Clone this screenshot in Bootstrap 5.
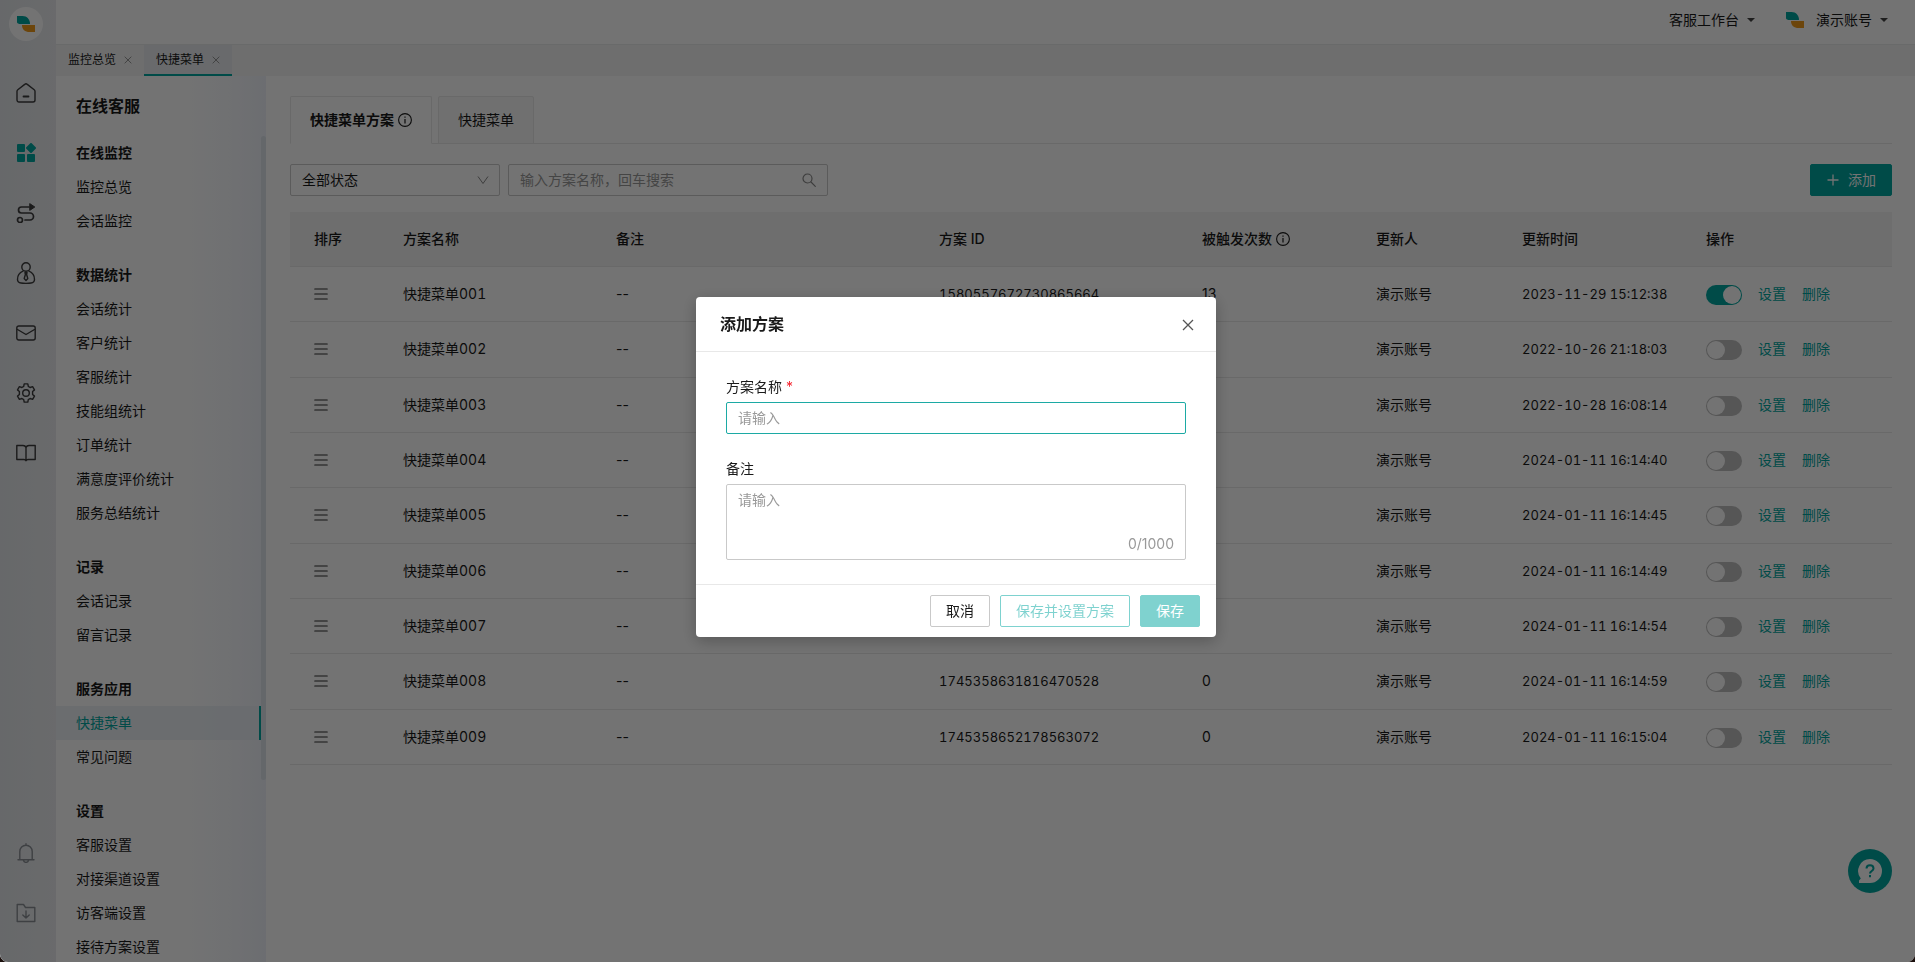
<!DOCTYPE html>
<html lang="zh-CN">
<head>
<meta charset="utf-8">
<meta name="viewport" content="width=device-width, initial-scale=1">
<title>快捷菜单</title>
<link href="https://cdn.jsdelivr.net/npm/bootstrap@5.3.0/dist/css/bootstrap.min.css" rel="stylesheet">
<style>
  :root { --teal: #00a6a0; --ink: #1a1a1a; --line: #e8e8e8; --field: #c9c9c9; }
  html { background: #1a0f0c; }
  body { font-family: Inter, "Noto Sans CJK SC", sans-serif; font-size: 14px; line-height: 22px; color: var(--ink); background: transparent; }
  a { color: inherit; text-decoration: none; }
  svg { display: block; flex: none; }
  .shell { border-radius: 0 0 8px 8px; background: #fff; }
  .line-icon { fill: none; stroke: currentColor; stroke-width: 1.4; stroke-linecap: round; stroke-linejoin: round; }

  .rail { width: 56px; padding-top: 7px; background: linear-gradient(90deg, #e4e7eb, #eaecef); color: #3c3c3c; }
  .rail a { height: 60px; padding-right: 4px; }
  .rail .rail-logo { width: 34px; height: 34px; padding: 0; margin-left: 9px; background: #fff; }
  .rail-main { margin-top: 22px; }
  .rail-foot { color: #8a8f94; margin-bottom: 19px; }

  .topbar { height: 44px; padding: 0 27px 4px 0; gap: 31px; }
  .topbar button { padding: 0; border: 0; background: none; color: inherit; }
  .topbar svg { margin-right: 12px; }
  .caret { border: 4px solid transparent; border-top-color: #444; border-bottom: 0; margin-left: 8px; }
  .page-tabs { height: 32px; background: #f4f4f4; border-top: 1px solid #e9eaec; font-size: 12px; }
  .page-tab { padding: 0 12px; gap: 8px; border-bottom: 2px solid transparent; }
  .page-tab.active { background: #e9ecf0; border-color: var(--teal); }
  .page-tab button { padding: 0; border: 0; background: none; color: #888; }

  .side { width: 210px; background: linear-gradient(90deg, #fff 60%, #f8fafd 82%, #eff2fa); }
  .side h1 { font-size: 16px; line-height: 60px; margin: 0; padding-left: 20px; font-weight: 600; }
  .side h2, .side a { font-size: 14px; line-height: 34px; height: 34px; margin: 0; padding-left: 20px; display: block; }
  .side h2 { font-weight: 600; }
  .side-group { margin-bottom: 20px; }
  .side a.active { background: rgba(233, 238, 244, .8); color: var(--teal); border-right: 2px solid var(--teal); }
  .side-thumb { width: 5px; height: 78%; background: #dde4ec; border-radius: 3px; }

  .work { padding: 20px 23px 0 24px; }
  .plan-tabs { gap: 6px; border-bottom: 1px solid var(--line); height: 48px; }
  .plan-tab { padding: 0 19px; gap: 4px; height: 48px; border: 1px solid var(--line); border-radius: 2px 2px 0 0; background: #f8f8f8; color: var(--ink); }
  .plan-tab.active { background: #fff; border-bottom-color: #fff; font-weight: 600; }
  .filters { gap: 8px; margin: 20px 0 16px; }
  .form-control, .form-select { font-size: 14px; line-height: 22px; padding: 4px 11px; border-color: var(--field); border-radius: 2px; color: var(--ink); background-color: #fff; }
  .form-control::placeholder { color: #999; }
  .form-control:focus { box-shadow: none; border-color: #1caaa4; }
  .status-pick { width: 210px; background-image: url("data:image/svg+xml,%3csvg xmlns='http://www.w3.org/2000/svg' viewBox='0 0 12 12'%3e%3cpath fill='none' stroke='%23888' d='M1 2.5 6 9.5 11 2.5'/%3e%3c/svg%3e"); background-size: 12px 12px; background-position: right 10px center; }
  .search-box { width: 320px; }
  .search-box svg { right: 12px; color: #888; stroke-width: 1.2; }
  .btn { font-size: 14px; line-height: 22px; padding: 4px 15px; border-radius: 2px; }
  .btn-teal, .btn-teal:disabled { background: var(--teal); border-color: var(--teal); color: #fff; }
  .btn-teal:disabled { opacity: .5; }
  .btn-line:disabled { border-color: var(--teal); color: var(--teal); opacity: .5; }
  .btn-plain { border-color: var(--field); color: var(--ink); }

  .plan-table { table-layout: fixed; margin: 0; --bs-table-color: var(--ink); --bs-table-bg: transparent; }
  .plan-table th, .plan-table td { height: 55px; padding: 0 0 0 16px; vertical-align: middle; border-bottom: 1px solid var(--line); color: var(--ink); white-space: nowrap; }
  .plan-table tbody tr:nth-child(3n+2) td { height: 56px; }
  .plan-table th:first-child, .plan-table td:first-child { padding-left: 24px; }
  .plan-table th { height: 54px; background: #f4f4f4; font-weight: 500; }
  .plan-table td a { color: var(--teal); }
  .plan-table .tab-num { font-variant-numeric: tabular-nums; }
  .plan-table .stamp { font-size: 13px; }
  .plan-table .form-check-input { width: 36px; height: 20px; margin: 2px 0 0; border: 0; float: none; background-color: #bfbfbf; background-size: 20px 20px; box-shadow: none;
    --bs-form-switch-bg: url("data:image/svg+xml,%3csvg xmlns='http://www.w3.org/2000/svg' viewBox='0 0 20 20'%3e%3ccircle cx='10' cy='10' r='9' fill='%23fff'/%3e%3c/svg%3e"); background-image: var(--bs-form-switch-bg); }
  .plan-table .form-check-input:checked { background-color: var(--teal); --bs-form-switch-bg: url("data:image/svg+xml,%3csvg xmlns='http://www.w3.org/2000/svg' viewBox='0 0 20 20'%3e%3ccircle cx='10' cy='10' r='9' fill='%23fff'/%3e%3c/svg%3e"); background-image: var(--bs-form-switch-bg); }

  .help-fab { right: 23px; bottom: 69px; width: 44px; height: 44px; padding: 0; border: 0; background: var(--teal); color: #fff; }
  .modal-backdrop { --bs-backdrop-opacity: .55; border-radius: 0 0 8px 8px; }
  .modal { padding-right: 3px; }
  .modal-dialog { max-width: 520px; margin-top: 297px; }
  .modal-content { border: 0; border-radius: 4px; box-shadow: 0 4px 16px rgba(0, 0, 0, .25); color: var(--ink); }
  .modal-header { padding: 16px 22px 16px 24px; border-color: var(--line); }
  .modal-title { font-size: 16px; line-height: 22px; font-weight: 600; }
  .modal-header button { padding: 2px 0 0; border: 0; background: none; color: #555; }
  .modal-body { padding: 24px 30px; }
  .modal-body label { display: block; margin-bottom: 4px; }
  .modal-body textarea { height: 76px; resize: none; }
  .star { color: #f5222d; }
  .tally { right: 12px; bottom: 5px; color: #999; }
  .modal-footer { padding: 10px 16px; gap: 10px; border-color: var(--line); }
  .modal-footer > * { margin: 0; }
</style>
</head>
<body class="overflow-hidden">
<svg class="d-none">
  <symbol id="brand" viewBox="0 0 18 16"><path fill="#00a6a0" d="M0 0h5.500C10 0 13 3.500 13 8H4C1.500 8 0 7.500 0 6z"/><path fill="#f09a1a" d="M5 9h13v7h-5.500C8 16 5 13.500 5 9z"/></symbol>
  <symbol id="cross" viewBox="0 0 12 12"><path d="M1 1l10 10M11 1L1 11" fill="none" stroke="currentColor" stroke-width="1.300"/></symbol>
  <symbol id="info" viewBox="0 0 14 14"><circle cx="7" cy="7" r="6.400" fill="none" stroke="currentColor" stroke-width="1.100"/><path d="M7 6v4.500M7 3.500v1.200" stroke="currentColor" stroke-width="1.200"/></symbol>
  <symbol id="grip" viewBox="0 0 14 14"><path d="M1 2h12M1 7h12M1 12h12" stroke="#777" stroke-width="1.700" stroke-linecap="round"/></symbol>
</svg>

<div class="shell d-flex vh-100 overflow-hidden">
  <nav class="rail d-flex flex-column flex-shrink-0" aria-label="主导航">
    <a href="#" class="rail-logo rounded-circle d-flex align-items-center justify-content-center" aria-label="主页"><svg width="18" height="18"><use href="#brand"/></svg></a>
    <div class="rail-main">
      <a href="#" class="d-flex align-items-center justify-content-center" aria-label="首页"><svg class="line-icon" width="20" height="20" viewBox="0 0 20 20"><path d="M1 8.300a2 2 0 0 1 .8-1.600L8.700 1.400a2 2 0 0 1 2.600 0l6.900 5.300a2 2 0 0 1 .8 1.600V17a2 2 0 0 1-2 2H3a2 2 0 0 1-2-2z"/><path d="M7.500 13.500h5" stroke-width="1.800"/></svg></a>
      <a href="#" class="d-flex align-items-center justify-content-center" aria-label="应用"><svg width="20" height="20" viewBox="0 0 20 20" fill="#00a6a0"><rect x="1" y="1" width="8" height="8" rx="1"/><rect x="1" y="11" width="8" height="8" rx="1"/><rect x="11" y="11" width="8" height="8" rx="1"/><rect x="11.200" y="1.200" width="7.600" height="7.600" rx="1" transform="rotate(45 15 5)"/></svg></a>
      <a href="#" class="d-flex align-items-center justify-content-center" aria-label="流程"><svg class="line-icon" width="20" height="20" viewBox="0 0 20 20"><path d="M13 4H5.500a3 3 0 0 0 0 6H14a3.500 3.500 0 0 1 0 7H9" stroke-width="1.700"/><circle cx="4" cy="17" r="2.500" stroke-width="1.700"/><path d="M14 .8l4.800 3.200L14 7.200z" fill="currentColor" stroke-width="1"/></svg></a>
      <a href="#" class="d-flex align-items-center justify-content-center" aria-label="客户"><svg class="line-icon" width="20" height="22" viewBox="0 0 20 22"><circle cx="10" cy="5" r="4.200"/><path d="M7 9.200C3.600 10.500 1.500 14 1.500 17.500c0 2.200 1.500 3.200 3.500 3.500 3 .4 7 .4 10 0 2-.3 3.500-1.300 3.500-3.500 0-3.500-2.100-7-5.500-8.300"/><path d="M9 10.500h2l-.4 2 1.200 4L10 18.500l-1.800-2 1.200-4z"/></svg></a>
      <a href="#" class="d-flex align-items-center justify-content-center" aria-label="邮件"><svg class="line-icon" width="20" height="16" viewBox="0 0 20 16"><rect x=".8" y="1" width="18.400" height="14" rx="2"/><path d="M1.500 4.500L10 9.500l8.500-5"/></svg></a>
      <a href="#" class="d-flex align-items-center justify-content-center" aria-label="设置"><svg class="line-icon" width="20" height="20" viewBox="0 0 20 20"><path d="M8.200.9h3.600l.5 2.500 1.800 1.100 2.500-.8 1.900 3.200-1.900 1.600v3l1.900 1.600-1.900 3.200-2.500-.8-1.800 1.100-.5 2.500H8.200l-.5-2.500-1.800-1.100-2.500.8-1.900-3.200 1.900-1.600v-3L1.500 6.900l1.900-3.200 2.500.8 1.800-1.100z"/><circle cx="10" cy="10" r="3.300"/></svg></a>
      <a href="#" class="d-flex align-items-center justify-content-center" aria-label="知识库"><svg class="line-icon" width="20" height="18" viewBox="0 0 20 18"><path d="M10 3.500C9.500 2 8.500 1.500 7 1.500H.8v14H8c1 0 1.700.4 2 1.200.3-.8 1-1.200 2-1.200h7.200v-14H13c-1.500 0-2.500.5-3 2zv13"/></svg></a>
    </div>
    <div class="rail-foot mt-auto">
      <a href="#" class="d-flex align-items-center justify-content-center" aria-label="通知"><svg class="line-icon" width="18" height="20" viewBox="0 0 18 20"><path d="M1 16.800h16M2.800 16.500V8.500a6.200 6.200 0 0 1 12.400 0v8M9 .8v1.300M6.500 17.500a2.600 2.600 0 0 0 5 0"/></svg></a>
      <a href="#" class="d-flex align-items-center justify-content-center" aria-label="下载"><svg class="line-icon" width="20" height="20" viewBox="0 0 20 20"><path d="M1.200 1.500h6.300l2 3h9.300v14H1.200zM10 8v7M6.800 12l3.200 3 3.200-3"/></svg></a>
    </div>
  </nav>

  <div class="flex-grow-1 d-flex flex-column overflow-hidden">
    <header class="topbar d-flex justify-content-end align-items-center flex-shrink-0 w-100">
      <button type="button" class="d-flex align-items-center">客服工作台<span class="caret"></span></button>
      <button type="button" class="d-flex align-items-center"><svg width="18" height="16"><use href="#brand"/></svg>演示账号<span class="caret"></span></button>
    </header>
    <div class="page-tabs d-flex flex-shrink-0">
      <div class="page-tab d-flex align-items-center"><a href="#">监控总览</a><button type="button" aria-label="关闭"><svg width="8" height="8"><use href="#cross"/></svg></button></div>
      <div class="page-tab active d-flex align-items-center"><a href="#">快捷菜单</a><button type="button" aria-label="关闭"><svg width="8" height="8"><use href="#cross"/></svg></button></div>
    </div>

    <div class="d-flex flex-grow-1 overflow-hidden">
      <aside class="side flex-shrink-0 d-flex flex-column">
        <h1>在线客服</h1>
        <div class="d-flex flex-grow-1 overflow-hidden">
          <div class="flex-grow-1" id="menu"></div>
          <div class="side-thumb"></div>
        </div>
      </aside>

      <main class="work flex-grow-1 overflow-hidden">
        <div class="plan-tabs d-flex">
          <button type="button" class="plan-tab active d-flex align-items-center">快捷菜单方案<svg width="14" height="14"><use href="#info"/></svg></button>
          <button type="button" class="plan-tab">快捷菜单</button>
        </div>
        <div class="filters d-flex">
          <select class="form-select status-pick" aria-label="状态"><option>全部状态</option></select>
          <div class="search-box position-relative d-flex align-items-center">
            <input class="form-control" type="text" aria-label="搜索方案" placeholder="输入方案名称，回车搜索">
            <svg class="line-icon position-absolute" width="14" height="14" viewBox="0 0 14 14"><circle cx="5.500" cy="5.500" r="4.500"/><path d="M9 9l4.300 4.300"/></svg>
          </div>
          <button type="button" class="btn btn-teal ms-auto d-flex align-items-center gap-2"><svg width="14" height="14" viewBox="0 0 14 14"><path d="M7 1.500v11M1.500 7h11" stroke="#fff" stroke-width="1.300"/></svg>添加</button>
        </div>
        <table class="table plan-table">
          <colgroup><col width="97"><col width="213"><col><col width="263"><col width="174"><col width="146"><col width="184"><col width="202"></colgroup>
          <thead><tr><th>排序</th><th>方案名称</th><th>备注</th><th>方案 ID</th><th><span class="d-flex align-items-center gap-1">被触发次数<svg width="14" height="14"><use href="#info"/></svg></span></th><th>更新人</th><th>更新时间</th><th>操作</th></tr></thead>
          <tbody id="plans"></tbody>
        </table>
      </main>
    </div>
  </div>
</div>

<button type="button" class="help-fab rounded-circle position-fixed d-flex align-items-center justify-content-center" aria-label="帮助">
  <svg width="24" height="24" viewBox="0 0 24 24"><path fill="#fff" d="M12 0a12 12 0 1 1 0 24H1v-2.500l1.800-2A12 12 0 0 1 12 0z"/><path d="M8.500 9.500c0-4.300 7-4.300 7 0 0 2.500-3.500 2.500-3.500 5M12 16v2.200" fill="none" stroke="#00a6a0" stroke-width="2"/></svg>
</button>

<div class="modal-backdrop show"></div>
<div class="modal show d-block" tabindex="-1" role="dialog" aria-labelledby="dlgTitle">
  <div class="modal-dialog">
    <form class="modal-content">
      <div class="modal-header">
        <h2 class="modal-title" id="dlgTitle">添加方案</h2>
        <button type="button" class="ms-auto" aria-label="关闭"><svg width="12" height="12"><use href="#cross"/></svg></button>
      </div>
      <div class="modal-body">
        <label for="planName">方案名称 <span class="star">*</span></label>
        <input class="form-control mb-4" id="planName" type="text" placeholder="请输入">
        <label for="planNote">备注</label>
        <div class="position-relative">
          <textarea class="form-control d-block" id="planNote" placeholder="请输入"></textarea>
          <span class="tally position-absolute">0/1000</span>
        </div>
      </div>
      <div class="modal-footer">
        <button type="button" class="btn btn-plain">取消</button>
        <button type="button" class="btn btn-line" disabled>保存并设置方案</button>
        <button type="submit" class="btn btn-teal" disabled>保存</button>
      </div>
    </form>
  </div>
</div>

<script src="https://cdn.jsdelivr.net/npm/bootstrap@5.3.0/dist/js/bootstrap.bundle.min.js"></script>
<script>
  const groups = [
    ['在线监控', '监控总览', '会话监控'],
    ['数据统计', '会话统计', '客户统计', '客服统计', '技能组统计', '订单统计', '满意度评价统计', '服务总结统计'],
    ['记录', '会话记录', '留言记录'],
    ['服务应用', '快捷菜单', '常见问题'],
    ['设置', '客服设置', '对接渠道设置', '访客端设置', '接待方案设置']
  ];
  document.getElementById('menu').innerHTML = groups.map(([title, ...items]) =>
    `<div class="side-group"><h2>${title}</h2>${items.map(t => `<a href="#"${t === '快捷菜单' ? ' class="active"' : ''}>${t}</a>`).join('')}</div>`).join('');

  const plans = [
    ['001', '1580557672730865664', 13, '2023-11-29 15:12:38'],
    ['002', '', '', '2022-10-26 21:18:03'],
    ['003', '', '', '2022-10-28 16:08:14'],
    ['004', '', '', '2024-01-11 16:14:40'],
    ['005', '', '', '2024-01-11 16:14:45'],
    ['006', '', '', '2024-01-11 16:14:49'],
    ['007', '', '', '2024-01-11 16:14:54'],
    ['008', '1745358631816470528', 0, '2024-01-11 16:14:59'],
    ['009', '1745358652178563072', 0, '2024-01-11 16:15:04']
  ];
  document.getElementById('plans').innerHTML = plans.map(([n, id, hits, time], i) =>
    `<tr><td><svg width="14" height="14"><use href="#grip"/></svg></td><td class="tab-num">快捷菜单${n}</td><td>--</td><td class="tab-num stamp">${id}</td><td>${hits}</td><td>演示账号</td><td class="tab-num stamp">${time}</td>
     <td><div class="form-switch d-flex align-items-center gap-3 p-0"><input class="form-check-input" type="checkbox" role="switch" aria-label="启用快捷菜单${n}"${i ? '' : ' checked'}><a href="#">设置</a><a href="#">删除</a></div></td></tr>`).join('');
  document.getElementById('planName').focus();
</script>
</body>
</html>
